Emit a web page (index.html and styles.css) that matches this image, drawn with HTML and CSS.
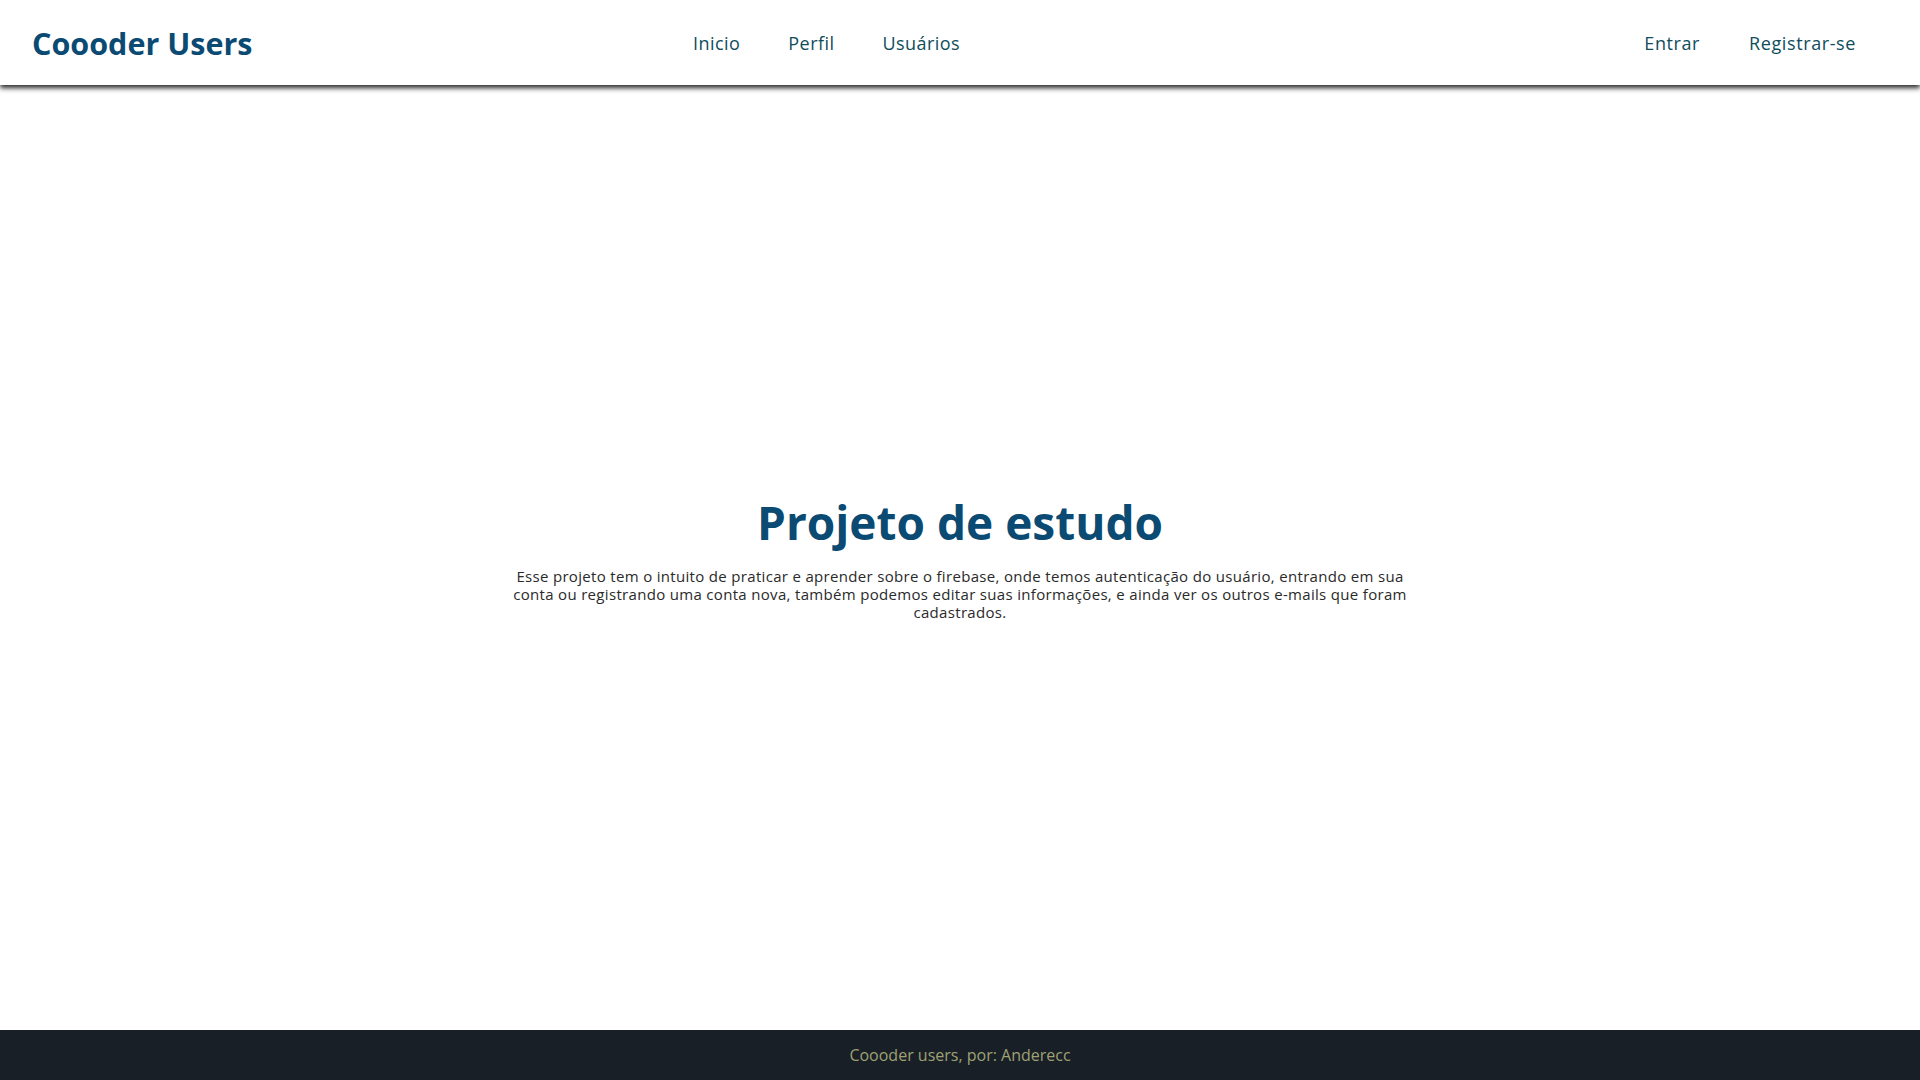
FILE: index.html
```html
<!DOCTYPE html>
<html lang="pt-BR">
<head>
<meta charset="utf-8">
<title>Coooder Users</title>
<link rel="stylesheet" href="styles.css">
</head>
<body>
<div class="page">
  <header class="header">
    <a class="logo" href="#">Coooder Users</a>
    <nav class="nav">
      <a href="#">Inicio</a>
      <a href="#">Perfil</a>
      <a href="#">Usuários</a>
    </nav>
    <nav class="nav nav-right">
      <a href="#">Entrar</a>
      <a href="#">Registrar-se</a>
    </nav>
  </header>
  <main class="main">
    <h1 class="title">Projeto de estudo</h1>
    <p class="desc">Esse projeto tem o intuito de praticar e aprender sobre o firebase, onde temos autenticação do usuário, entrando em sua conta ou registrando uma conta nova, também podemos editar suas informações, e ainda ver os outros e-mails que foram cadastrados.</p>
  </main>
  <footer class="footer">Coooder users, por: Anderecc</footer>
</div>
</body>
</html>
```
FILE: styles.css
```css
* { box-sizing: border-box; }
html, body { margin: 0; padding: 0; height: 100%; }
body {
  font-family: "Open Sans", "Noto Sans", sans-serif;
  background: #ffffff;
}
.page {
  min-height: 100vh;
  display: flex;
  flex-direction: column;
}
.header {
  height: 85px;
  display: flex;
  align-items: center;
  padding: 0 64px 0 32px;
  background: #fff;
  box-shadow: 0 3px 5px rgba(0,0,0,0.85);
  position: relative;
  z-index: 1;
}
.logo {
  font-size: 30.5px;
  font-weight: 700;
  color: #0b4a72;
  text-decoration: none;
  width: 661px;
}
.nav {
  display: flex;
  gap: 48px;
}
.nav a {
  font-size: 18px;
  letter-spacing: 0.45px;
  color: #0f4d5c;
  text-decoration: none;
}
.nav-right a { letter-spacing: 0.6px; }
.nav-right { margin-left: auto; gap: 49px; }
.main {
  flex: 1;
  display: flex;
  flex-direction: column;
  align-items: center;
  justify-content: center;
  text-align: center;
  padding-bottom: 4px;
}
.title {
  margin: 0 0 14px;
  font-size: 46px;
  font-weight: 700;
  color: #0b4a72;
}
.desc {
  margin: 0;
  max-width: 900px;
  font-size: 15px;
  line-height: 18px;
  letter-spacing: 0.32px;
  color: #2a2a2a;
}
.footer {
  height: 50px;
  background: #181f27;
  color: #9fa173;
  display: flex;
  align-items: center;
  justify-content: center;
  font-size: 16px;
}
```
